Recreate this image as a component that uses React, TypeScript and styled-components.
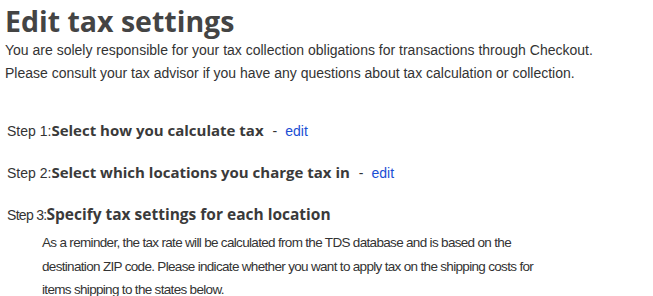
import styled, { createGlobalStyle } from 'styled-components';

const GlobalStyle = createGlobalStyle`
  html, body {
    margin: 0;
    padding: 0;
    background: #ffffff;
  }
  body {
    font-family: "Liberation Sans", Arial, sans-serif;
    color: #333333;
  }
`;

// Page layout
const Page = styled.div`
  padding: 4px 0 0 5px;
  display: flex;
  flex-direction: column;
`;

const Title = styled.h1`
  margin: 0;
  font-family: "Open Sans", sans-serif;
  font-weight: 700;
  font-size: 28.5px;
  line-height: 35px;
  color: #444444;
`;

const Intro = styled.p`
  margin: 0;
  font-size: 14px;
  line-height: 23px;
  color: #333333;
`;

const StepList = styled.div`
  display: flex;
  flex-direction: column;
  gap: 18px;
  margin-top: 34px;
  padding-left: 2px;
`;

const Step = styled.div`
  display: flex;
  flex-direction: column;
`;

const StepHead = styled.div`
  display: flex;
  align-items: baseline;
  line-height: 23px;
`;

const StepLabel = styled.span<{ $narrow?: boolean }>`
  font-size: 14px;
  letter-spacing: ${(p) => (p.$narrow ? '-0.7px' : '0')};
  color: #333333;
`;

const StepTitle = styled.span<{ $large?: boolean }>`
  font-family: "Open Sans", sans-serif;
  font-weight: 700;
  font-size: ${(p) => (p.$large ? '15.5px' : '15px')};
  color: #3a3a3a;
`;

const Separator = styled.span`
  font-size: 14px;
  margin: 0 8px 0 9px;
  color: #333333;
`;

const EditLink = styled.a`
  font-size: 14px;
  color: #1a4ed4;
  text-decoration: none;
  cursor: pointer;
`;

const StepNote = styled.p`
  margin: 4px 0 0 35px;
  width: 492px;
  font-size: 13.5px;
  letter-spacing: -0.68px;
  line-height: 23.5px;
  color: #333333;
`;

interface StepData {
  label: string;
  title: string;
  editable: boolean;
  note?: string;
}

const steps: StepData[] = [
  { label: 'Step 1:', title: 'Select how you calculate tax', editable: true },
  { label: 'Step 2:', title: 'Select which locations you charge tax in', editable: true },
  {
    label: 'Step 3:',
    title: 'Specify tax settings for each location',
    editable: false,
    note:
      'As a reminder, the tax rate will be calculated from the TDS database and is based on the destination ZIP code. Please indicate whether you want to apply tax on the shipping costs for items shipping to the states below.',
  },
];

export default function App() {
  return (
    <>
      <GlobalStyle />
      <Page>
        <Title>Edit tax settings</Title>
        <Intro>
          You are solely responsible for your tax collection obligations for transactions through Checkout.
          <br />
          Please consult your tax advisor if you have any questions about tax calculation or collection.
        </Intro>
        <StepList>
          {steps.map((step) => (
            <Step key={step.label}>
              <StepHead>
                <StepLabel $narrow={!step.editable}>{step.label}</StepLabel>
                <StepTitle $large={!step.editable}>{step.title}</StepTitle>
                {step.editable && (
                  <>
                    <Separator>-</Separator>
                    <EditLink>edit</EditLink>
                  </>
                )}
              </StepHead>
              {step.note && <StepNote>{step.note}</StepNote>}
            </Step>
          ))}
        </StepList>
      </Page>
    </>
  );
}
